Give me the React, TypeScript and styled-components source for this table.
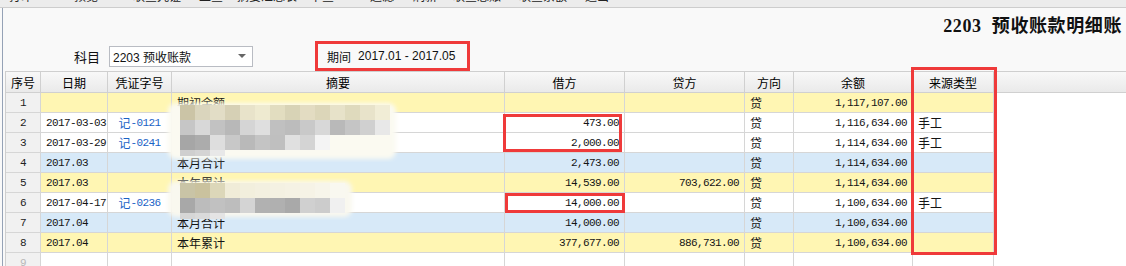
import styled, { createGlobalStyle } from "styled-components";

const CJK = `"Noto Sans CJK SC", sans-serif`;
const UI = `"Liberation Sans", "Noto Sans CJK SC", sans-serif`;
const MONO = `"Liberation Mono", "Noto Sans CJK SC", monospace`;
const COLS = "35px 67px 64px 333px 120px 120px 49px 119px 81px 1fr";
const RED = "#ef3a3a";

const GlobalStyle = createGlobalStyle`
  html, body { margin: 0; padding: 0; background: #fff; }
  body { font-family: ${UI}; }
`;

type Tone = "yellow" | "blue" | "white";

const tools = [
  { t: "打印", w: 42 },
  { t: "预览", w: 88 },
  { t: "联查凭证", w: 54 },
  { t: "上查", w: 54 },
  { t: "摘要汇总表", w: 58 },
  { t: "下查", w: 52 },
  { t: "过滤", w: 68 },
  { t: "刷新", w: 18 },
  { t: "联查总账", w: 86 },
  { t: "联查余额", w: 46 },
  { t: "退出", w: 62 },
];

const headers = ["序号", "日期", "凭证字号", "摘要", "借方", "贷方", "方向", "余额", "来源类型"];

const rows: {
  date: string;
  voucher: string;
  memo: string;
  debit: string;
  credit: string;
  dir: string;
  balance: string;
  source: string;
  tone: Tone;
}[] = [
  { date: "", voucher: "", memo: "期初余额", debit: "", credit: "", dir: "贷", balance: "1,117,107.00", source: "", tone: "yellow" },
  { date: "2017-03-03", voucher: "记-0121", memo: "", debit: "473.00", credit: "", dir: "贷", balance: "1,116,634.00", source: "手工", tone: "white" },
  { date: "2017-03-29", voucher: "记-0241", memo: "", debit: "2,000.00", credit: "", dir: "贷", balance: "1,114,634.00", source: "手工", tone: "white" },
  { date: "2017.03", voucher: "", memo: "本月合计", debit: "2,473.00", credit: "", dir: "贷", balance: "1,114,634.00", source: "", tone: "blue" },
  { date: "2017.03", voucher: "", memo: "本年累计", debit: "14,539.00", credit: "703,622.00", dir: "贷", balance: "1,114,634.00", source: "", tone: "yellow" },
  { date: "2017-04-17", voucher: "记-0236", memo: "", debit: "14,000.00", credit: "", dir: "贷", balance: "1,100,634.00", source: "手工", tone: "white" },
  { date: "2017.04", voucher: "", memo: "本月合计", debit: "14,000.00", credit: "", dir: "贷", balance: "1,100,634.00", source: "", tone: "blue" },
  { date: "2017.04", voucher: "", memo: "本年累计", debit: "377,677.00", credit: "886,731.00", dir: "贷", balance: "1,100,634.00", source: "", tone: "yellow" },
];

// pixelated blur over the memo column
const mosaicTop = [
  ["#cbc4a6", "#dad5bd", "#e2ddc6", "#d6d0b5", "#e8e3ca", "#eeead0", "#e2ddc0", "#d8d3b6", "#e3dcc2", "#dcd6b9", "#e7e2c9", "#dfdabd", "#e8e3ca", "#f1edd6"],
  ["#c6c6c6", "#d8d8d8", "#c2c2c2", "#b8b8b8", "#d5d5d5", "#dfdfdf", "#c0c0c0", "#bcbcbc", "#c9c9c9", "#d8d8d8", "#b9b9b9", "#c5c5c5", "#d0d0d0", "#e8e8e8"],
  ["#a6a6a6", "#acacac", "#dedede", "#c8c8c8", "#b9b9b9", "#c4c4c4", "#bfbfbf", "#e0e0e0", "#d4d4d4", "#f4f4f4"],
  ["#cfcfcf", "#d4d4d4", "#e8e8e8"],
];

const mosaicBottom = [
  ["#c9c4a6", "#cac29e", "#dcd7b9", "#f0ecd8", "#f2efdd", "#f3f0e0", "#f4f1e2", "#f5f2e4", "#f6f3e6", "#f7f5ea", "#f9f8f0"],
  ["#a8a8a8", "#bcbcbc", "#c1c1c1", "#bdbdbd", "#d4d4d4", "#b1b1b1", "#b0b0b0", "#a9a9a9", "#d0d0d0", "#cccccc", "#f0f0f0"],
  ["#d6d6d6", "#dadada", "#e4e4e4"],
];

const Page = styled.div`
  position: relative;
  width: 1126px;
  height: 266px;
  overflow: hidden;
  background: #f9f9f9;
`;

const Toolbar = styled.div`
  height: 7px;
  border-bottom: 1px solid #cdcdcd;
  background: #ececec;
  overflow: hidden;
  display: flex;
`;

const ToolBtn = styled.div<{ $w: number }>`
  width: ${(p) => p.$w}px;
  flex: none;
  display: flex;
  justify-content: center;
  margin-top: -12px;
  font: 12px/16px ${CJK};
  color: #222;
  white-space: nowrap;
`;

const Frame = styled.div`
  margin-left: 2px;
  border-left: 1px solid #95a2b6;
  padding-left: 2px;
`;

const TitleBar = styled.div`
  height: 33px;
  display: flex;
  align-items: center;
  justify-content: flex-end;
  padding: 2px 4px 0 0;
  box-sizing: border-box;
`;

const Title = styled.h1`
  margin: 0;
  font: 700 18px/20px "Liberation Serif", "Noto Sans CJK SC", serif;
  color: #111;
  white-space: pre;
  letter-spacing: 0.6px;
`;

const FilterRow = styled.div`
  height: 30px;
  display: flex;
  align-items: center;
  padding-left: 69px;
`;

const Label = styled.span`
  font: 13px ${CJK};
  color: #111;
  margin-right: 9px;
`;

const Combo = styled.div`
  width: 144px;
  height: 21px;
  box-sizing: border-box;
  border: 1px solid #b9bcc3;
  background: #fff;
  display: flex;
  align-items: center;
  justify-content: space-between;
  padding: 0 6px 0 3px;
  font: 12px ${UI};
  color: #111;
`;

const Caret = styled.span`
  width: 0;
  height: 0;
  border-left: 4px solid transparent;
  border-right: 4px solid transparent;
  border-top: 4px solid #666;
`;

const PeriodBox = styled.div`
  margin-left: 62px;
  width: 155px;
  height: 30px;
  box-sizing: border-box;
  border: 3px solid ${RED};
  display: flex;
  align-items: center;
  padding-left: 9px;
  font: 12px ${UI};
  color: #111;
  gap: 7px;
`;

const Table = styled.div`
  border-top: 1px solid #cfcfcf;
  border-left: 1px solid #cfcfcf;
  background: #fff;
`;

const Row = styled.div<{ $tone?: Tone; $head?: boolean }>`
  display: grid;
  grid-template-columns: ${COLS};
  height: ${(p) => (p.$head ? 21 : 20)}px;
  background: ${(p) =>
    p.$head
      ? "linear-gradient(#f8f8f8, #e9e9e9)"
      : p.$tone === "yellow"
      ? "#fff6b3"
      : p.$tone === "blue"
      ? "#d7e9f8"
      : "#fff"};
`;

const Cell = styled.div<{ $align?: "left" | "right" | "center"; $kind?: "mono" | "cjk" | "link" }>`
  box-sizing: border-box;
  border-right: 1px solid #d6d6d6;
  border-bottom: 1px solid #d6d6d6;
  display: flex;
  align-items: center;
  justify-content: ${(p) =>
    p.$align === "right" ? "flex-end" : p.$align === "center" ? "center" : "flex-start"};
  padding: ${(p) => (p.$align === "right" ? "0 5px 0 0" : p.$align === "center" ? "0" : "0 0 0 5px")};
  white-space: nowrap;
  overflow: hidden;
  font-family: ${(p) => (p.$kind === "mono" || p.$kind === "link" ? MONO : CJK)};
  font-size: ${(p) => (p.$kind === "mono" || p.$kind === "link" ? "11px" : "12px")};
  letter-spacing: ${(p) => (p.$kind === "mono" || p.$kind === "link" ? "-0.6px" : "0")};
  color: ${(p) => (p.$kind === "link" ? "#1a63c6" : "#141414")};
`;

const HeadCell = styled(Cell)`
  border-color: #d0d0d0;
  color: #000;
`;

const NoCell = styled(Cell)<{ $muted?: boolean }>`
  background: #f1f1f1;
  color: ${(p) => (p.$muted ? "#b8b8b8" : "#222")};
`;

const Filler = styled.div<{ $head?: boolean }>`
  background: ${(p) => (p.$head ? "transparent" : "#fff")};
  border-bottom: ${(p) => (p.$head ? "1px solid #d0d0d0" : "none")};
`;

const LinkChar = styled.span`
  font: 12px ${CJK};
  letter-spacing: 0;
`;

const Highlight = styled.div<{ $x: number; $y: number; $w: number; $h: number }>`
  position: absolute;
  left: ${(p) => p.$x}px;
  top: ${(p) => p.$y}px;
  width: ${(p) => p.$w}px;
  height: ${(p) => p.$h}px;
  box-sizing: border-box;
  border: 3px solid ${RED};
  pointer-events: none;
`;

const MosaicLayer = styled.svg<{ $x: number; $y: number }>`
  position: absolute;
  left: ${(p) => p.$x}px;
  top: ${(p) => p.$y}px;
  pointer-events: none;
`;

function Mosaic({
  x,
  y,
  w,
  h,
  blocks,
  halo,
  id,
}: {
  x: number;
  y: number;
  w: number;
  h: number;
  blocks: string[][];
  halo: string;
  id: string;
}) {
  return (
    <MosaicLayer $x={x} $y={y} width={w} height={h}>
      <defs>
        <filter id={`${id}-soft`} x="-10%" y="-10%" width="120%" height="120%">
          <feGaussianBlur stdDeviation="2" />
        </filter>
        <filter id={`${id}-px`}>
          <feGaussianBlur stdDeviation="0.7" />
        </filter>
      </defs>
      <rect x={4} y={3} width={w - 8} height={h - 6} rx={8} fill={halo} filter={`url(#${id}-soft)`} />
      <g filter={`url(#${id}-px)`}>
        {blocks.map((line, r) =>
          line.map((c, i) => (
            <rect
              key={`${r}-${i}`}
              x={16 + i * 15}
              y={5 + r * 15}
              width={15}
              height={r === blocks.length - 1 ? 6 : 15}
              fill={c}
            />
          ))
        )}
      </g>
    </MosaicLayer>
  );
}

function Voucher({ v }: { v: string }) {
  if (!v) return null;
  return (
    <>
      <LinkChar>{v.slice(0, 1)}</LinkChar>
      {v.slice(1)}
    </>
  );
}

export default function App() {
  return (
    <Page>
      <GlobalStyle />
      <Toolbar>
        {tools.map((t) => (
          <ToolBtn key={t.t} $w={t.w}>
            {t.t}
          </ToolBtn>
        ))}
      </Toolbar>
      <Frame>
        <TitleBar>
          <Title>{"2203  预收账款明细账"}</Title>
        </TitleBar>
        <FilterRow>
          <Label>科目</Label>
          <Combo>
            <span>2203 预收账款</span>
            <Caret />
          </Combo>
          <PeriodBox>
            <span>期间</span>
            <span>2017.01 - 2017.05</span>
          </PeriodBox>
        </FilterRow>
        <Table>
          <Row $head>
            {headers.map((h) => (
              <HeadCell key={h} $align="center">
                {h}
              </HeadCell>
            ))}
            <Filler $head />
          </Row>
          {rows.map((r, i) => (
            <Row key={i} $tone={r.tone}>
              <NoCell $align="center" $kind="mono">
                {i + 1}
              </NoCell>
              <Cell $kind="mono">{r.date}</Cell>
              <Cell $kind="link" $align="center">
                <Voucher v={r.voucher} />
              </Cell>
              <Cell>{r.memo}</Cell>
              <Cell $kind="mono" $align="right">
                {r.debit}
              </Cell>
              <Cell $kind="mono" $align="right">
                {r.credit}
              </Cell>
              <Cell>{r.dir}</Cell>
              <Cell $kind="mono" $align="right">
                {r.balance}
              </Cell>
              <Cell>{r.source}</Cell>
              <Filler />
            </Row>
          ))}
          <Row $tone="white">
            <NoCell $align="center" $kind="mono" $muted>
              9
            </NoCell>
            <Cell />
            <Cell />
            <Cell />
            <Cell />
            <Cell />
            <Cell />
            <Cell />
            <Cell />
            <Filler />
          </Row>
        </Table>
      </Frame>

      <Mosaic id="m1" x={164} y={100} w={236} h={62} blocks={mosaicTop} halo="#fbfaf1" />
      <Mosaic id="m2" x={164} y={178} w={192} h={42} blocks={mosaicBottom} halo="#f9f8ef" />

      <Highlight $x={503} $y={114} $w={119} $h={38} />
      <Highlight $x={505} $y={193} $w={120} $h={20} />
      <Highlight $x={911} $y={67} $w={86} $h={188} />
    </Page>
  );
}
